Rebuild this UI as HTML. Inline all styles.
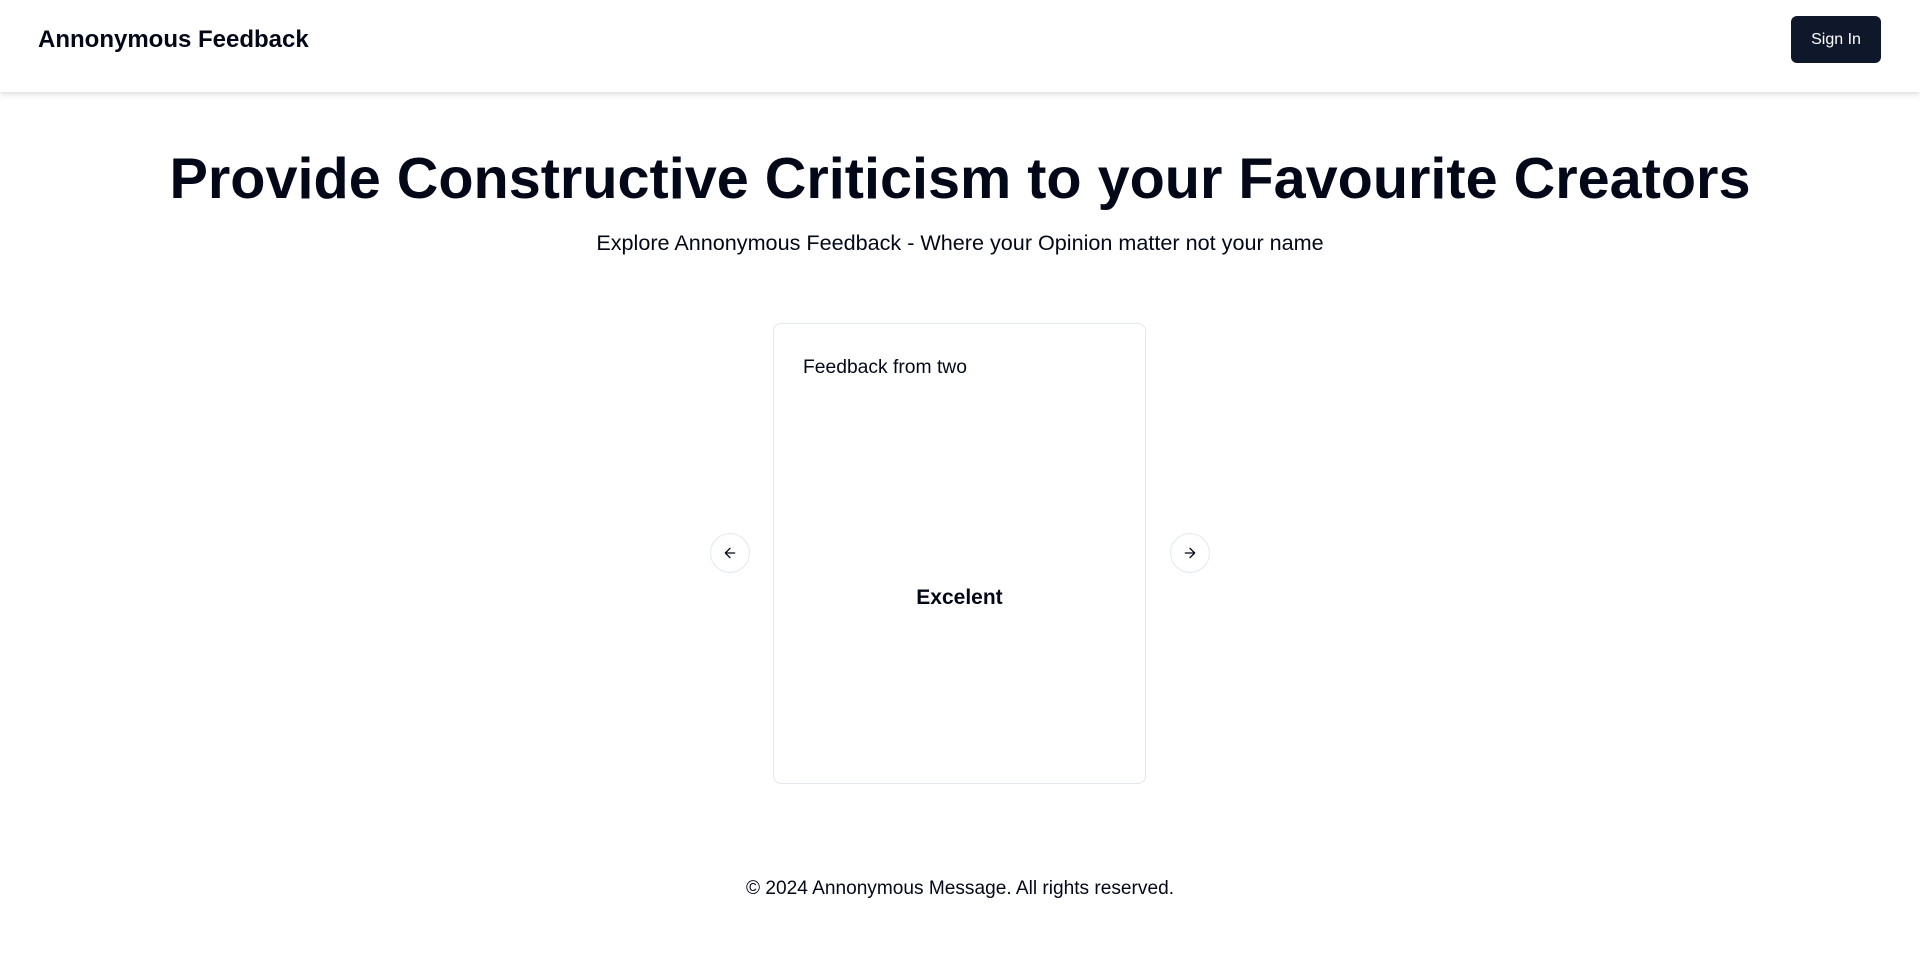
<!DOCTYPE html>
<html><head><style>
body{margin:0;width:1920px;height:972px;background:#fff;font-family:"Liberation Sans",sans-serif;color:#020817;position:relative;overflow:hidden}
.hdr{position:absolute;left:0;top:0;width:1920px;height:92px;box-shadow:0 2px 6px rgba(0,0,0,.15);background:#fff}
.logo{position:absolute;left:38px;top:26px;font-size:24px;font-weight:bold}
.btn{position:absolute;left:1791px;top:16px;width:90px;height:47px;background:#0f172a;color:#fff;border-radius:6px;font-size:16px;display:flex;align-items:center;justify-content:center}
h1{position:absolute;top:146px;left:0;width:1920px;text-align:center;margin:0;font-size:57.6px;font-weight:bold}
.sub{position:absolute;top:230px;left:0;width:1920px;text-align:center;font-size:21.6px}
.card{position:absolute;left:773px;top:323px;width:371px;height:459px;border:1px solid #e2e8f0;border-radius:8px}
.ft{position:absolute;left:29px;top:33px;font-size:19.3px}
.ex{position:absolute;left:0;width:371px;top:262px;text-align:center;font-size:21px;font-weight:bold}
.arr{position:absolute;top:533px;width:38px;height:38px;border:1px solid #e2e8f0;border-radius:50%;display:flex;align-items:center;justify-content:center}
.foot{position:absolute;top:878px;left:0;width:1920px;text-align:center;font-size:19.1px}
</style></head><body>
<div class="hdr"><div class="logo">Annonymous Feedback</div><div class="btn">Sign In</div></div>
<h1>Provide Constructive Criticism to your Favourite Creators</h1>
<div class="sub">Explore Annonymous Feedback - Where your Opinion matter not your name</div>
<div class="arr" style="left:710px"><svg width="16" height="16" viewBox="0 0 24 24" fill="none" stroke="#020817" stroke-width="2" stroke-linecap="round" stroke-linejoin="round"><path d="M19 12H5M12 19l-7-7 7-7"/></svg></div>
<div class="card"><div class="ft">Feedback from two</div><div class="ex">Excelent</div></div>
<div class="arr" style="left:1170px"><svg width="16" height="16" viewBox="0 0 24 24" fill="none" stroke="#020817" stroke-width="2" stroke-linecap="round" stroke-linejoin="round"><path d="M5 12h14M12 5l7 7-7 7"/></svg></div>
<div class="foot">© 2024 Annonymous Message. All rights reserved.</div>
</body></html>
